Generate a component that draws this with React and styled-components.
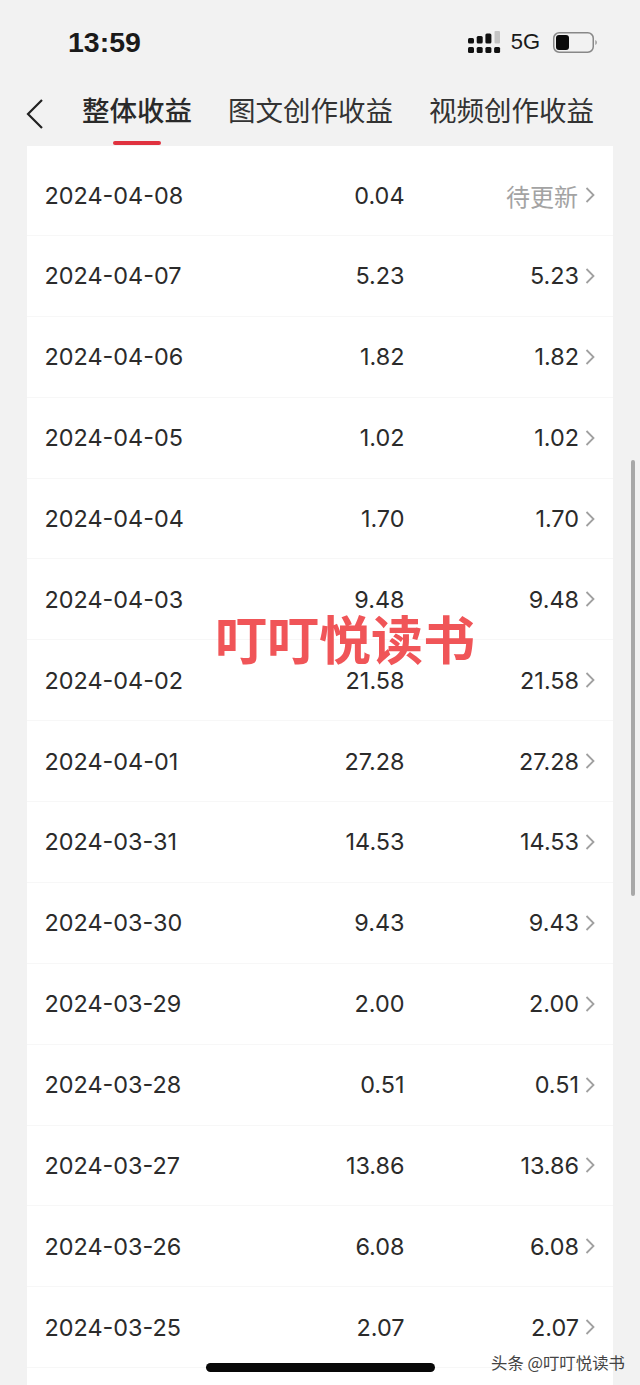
import React from 'react';
import styled, {createGlobalStyle} from 'styled-components';

const GlobalStyle = createGlobalStyle`
  html, body {
    margin: 0;
    padding: 0;
    background: #f2f2f2;
  }
  body {
    font-family: Inter, "Noto Sans CJK SC", sans-serif;
    color: #222;
  }
`;

const Screen = styled.div`
  position: relative;
  display: flex;
  flex-direction: column;
  width: 640px;
  height: 1385px;
  overflow: hidden;
  background: #f2f2f2;
`;

const StatusBar = styled.div`
  display: flex;
  align-items: center;
  justify-content: space-between;
  flex-shrink: 0;
  height: 84px;
  padding: 0 43px 0 68px;
  box-sizing: border-box;
`;

const Clock = styled.div`
  font-family: "Liberation Sans", sans-serif;
  font-size: 28.5px;
  font-weight: 700;
  color: #1a1a1a;
`;

const StatusIcons = styled.div`
  display: flex;
  align-items: center;
`;

const Network = styled.span`
  margin: 0 13px 0 10px;
  font-family: "Liberation Sans", sans-serif;
  font-size: 22px;
  color: #1a1a1a;
`;

const TabBar = styled.div`
  display: flex;
  align-items: center;
  flex-shrink: 0;
  height: 50px;
  padding: 0 0 12px 26px;
`;

const BackButton = styled.svg`
  width: 18px;
  height: 32px;
  margin: 9px 38px 0 0;
  flex-shrink: 0;
`;

const Tab = styled.div`
  position: relative;
  font-family: "Noto Sans CJK SC", sans-serif;
  font-size: 27.5px;
  line-height: 50px;
  font-weight: ${p => (p.$active ? 500 : 400)};
  color: ${p => (p.$active ? '#2a2a2a' : '#333')};
  margin-right: 36px;
  white-space: nowrap;
`;

const TabLine = styled.i`
  position: absolute;
  left: 31px;
  bottom: -11px;
  width: 48px;
  height: 4px;
  border-radius: 2px;
  background: #e0323f;
`;

const Card = styled.div`
  flex: 1;
  margin: 0 27px;
  padding-top: 9.2px;
  background: #fff;
`;

const Row = styled.div`
  display: grid;
  grid-template-columns: 1fr 174.5px 174.5px 16px;
  align-items: center;
  height: 80.86px;
  padding: 0 18px 0 17.5px;
  box-sizing: border-box;
  border-bottom: 1px solid #f7f7f7;
  font-size: 23.4px;
  color: #2b2b2b;
`;

const Amount = styled.div`
  text-align: right;
`;

const Pending = styled.div`
  margin-right: 1px;
  text-align: right;
  font-family: "Noto Sans CJK SC", sans-serif;
  font-size: 24px;
  color: #a3a3a3;
`;

const Chevron = styled.svg`
  width: 10px;
  height: 18px;
  justify-self: end;
`;

const Scrollbar = styled.div`
  position: absolute;
  left: 631px;
  top: 460px;
  width: 4px;
  height: 436px;
  border-radius: 2px;
  background: #a8a8a8;
`;

const Stamp = styled.div`
  position: absolute;
  left: 215px;
  top: 601px;
  font-family: "Noto Sans CJK SC", sans-serif;
  font-size: 52px;
  line-height: 74px;
  font-weight: 700;
  color: #f05558;
  white-space: nowrap;
`;

const HomeBar = styled.div`
  position: absolute;
  left: 206px;
  top: 1363px;
  width: 229px;
  height: 9px;
  border-radius: 5px;
  background: #080808;
`;

const Credit = styled.div`
  position: absolute;
  left: 491px;
  top: 1352px;
  font-family: "Noto Sans CJK SC", sans-serif;
  font-size: 16.4px;
  line-height: 20px;
  color: #444;
  white-space: nowrap;
`;

const rows = [
    ['2024-04-08', '0.04', null],
    ['2024-04-07', '5.23', '5.23'],
    ['2024-04-06', '1.82', '1.82'],
    ['2024-04-05', '1.02', '1.02'],
    ['2024-04-04', '1.70', '1.70'],
    ['2024-04-03', '9.48', '9.48'],
    ['2024-04-02', '21.58', '21.58'],
    ['2024-04-01', '27.28', '27.28'],
    ['2024-03-31', '14.53', '14.53'],
    ['2024-03-30', '9.43', '9.43'],
    ['2024-03-29', '2.00', '2.00'],
    ['2024-03-28', '0.51', '0.51'],
    ['2024-03-27', '13.86', '13.86'],
    ['2024-03-26', '6.08', '6.08'],
    ['2024-03-25', '2.07', '2.07'],
];

const SignalIcon = () => (
    <svg width="33" height="22" viewBox="0 0 33 22">
        <rect x="0" y="7" width="6" height="5.5" rx="1.5" fill="#111"/>
        <rect x="8.7" y="5" width="6" height="7.5" rx="1.5" fill="#111"/>
        <rect x="17.4" y="2.5" width="6" height="10" rx="1.5" fill="#111"/>
        <rect x="26.5" y="0" width="5.5" height="12.5" rx="1" fill="#c4c4c4"/>
        <rect x="0" y="16" width="6" height="6" rx="1.5" fill="#111"/>
        <rect x="8.7" y="16" width="6" height="6" rx="1.5" fill="#111"/>
        <rect x="17.4" y="16" width="6" height="6" rx="1.5" fill="#111"/>
        <rect x="26.1" y="16" width="6" height="6" rx="1.5" fill="#111"/>
    </svg>
);

const BatteryIcon = () => (
    <svg width="44" height="21" viewBox="0 0 44 21">
        <rect x="0.75" y="0.75" width="39.5" height="19.5" rx="5.5" fill="none" stroke="#888" strokeWidth="1.5"/>
        <rect x="3" y="3" width="13" height="15" rx="3" fill="#0a0a0a"/>
        <path d="M42.5 8 C44 9 44 12 42.5 13 Z" fill="#777"/>
    </svg>
);

const App = () => {
    return (
        <Screen>
            <GlobalStyle/>
            <StatusBar>
                <Clock>13:59</Clock>
                <StatusIcons>
                    <SignalIcon/>
                    <Network>5G</Network>
                    <BatteryIcon/>
                </StatusIcons>
            </StatusBar>
            <TabBar>
                <BackButton viewBox="0 0 18 32">
                    <path d="M16 2 L2 16 L16 30" fill="none" stroke="#222" strokeWidth="2.2"/>
                </BackButton>
                <Tab $active>整体收益<TabLine/></Tab>
                <Tab>图文创作收益</Tab>
                <Tab>视频创作收益</Tab>
            </TabBar>
            <Card>
                {rows.map(([date, income, settled]) => (
                    <Row key={date}>
                        <div>{date}</div>
                        <Amount>{income}</Amount>
                        {settled ? <Amount>{settled}</Amount> : <Pending>待更新</Pending>}
                        <Chevron viewBox="0 0 10 18">
                            <path d="M1.5 2 L8.5 9 L1.5 16" fill="none" stroke="#a0a0a0" strokeWidth="1.8"/>
                        </Chevron>
                    </Row>
                ))}
            </Card>
            <Scrollbar/>
            <Stamp>叮叮悦读书</Stamp>
            <HomeBar/>
            <Credit>头条 @叮叮悦读书</Credit>
        </Screen>
    );
};

export default App;
